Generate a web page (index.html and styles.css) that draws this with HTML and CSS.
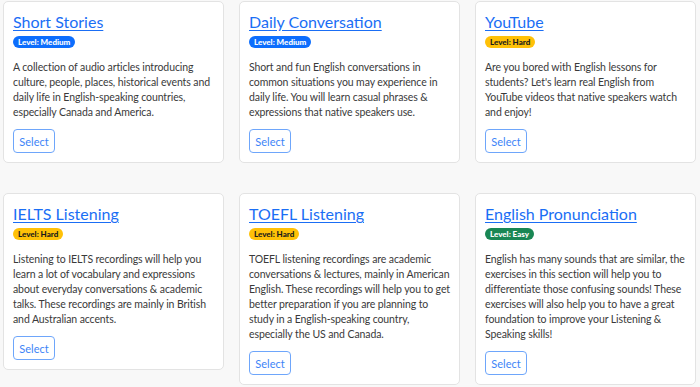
FILE: index.html
```html
<!DOCTYPE html>

<html>
    <head>
        <title>Courses</title>
        <link rel="stylesheet" href="styles.css">
    </head>

    <body>
        <div class="grid">
            <div class="card">
                <a class="card-title" href="#">Short Stories</a>
                <span class="badge badge-medium">Level: Medium</span>
                <p>A collection of audio articles introducing culture, people, places, historical events and daily life in English-speaking countries, especially Canada and America.</p>
                <button class="btn-select">Select</button>
            </div>

            <div class="card">
                <a class="card-title" href="#">Daily Conversation</a>
                <span class="badge badge-medium">Level: Medium</span>
                <p>Short and fun English conversations in common situations you may experience in daily life. You will learn casual phrases &amp; expressions that native speakers use.</p>
                <button class="btn-select">Select</button>
            </div>

            <div class="card">
                <a class="card-title" href="#">YouTube</a>
                <span class="badge badge-hard">Level: Hard</span>
                <p>Are you bored with English lessons for students? Let's learn real English from YouTube videos that native speakers watch and enjoy!</p>
                <button class="btn-select">Select</button>
            </div>

            <div class="card">
                <a class="card-title" href="#">IELTS Listening</a>
                <span class="badge badge-hard">Level: Hard</span>
                <p>Listening to IELTS recordings will help you learn a lot of vocabulary and expressions about everyday conversations &amp; academic talks. These recordings are mainly in British and Australian accents.</p>
                <button class="btn-select">Select</button>
            </div>

            <div class="card">
                <a class="card-title" href="#">TOEFL Listening</a>
                <span class="badge badge-hard">Level: Hard</span>
                <p>TOEFL listening recordings are academic conversations &amp; lectures, mainly in American English. These recordings will help you to get better preparation if you are planning to study in a English-speaking country, especially the US and Canada.</p>
                <button class="btn-select">Select</button>
            </div>

            <div class="card">
                <a class="card-title" href="#">English Pronunciation</a>
                <span class="badge badge-easy">Level: Easy</span>
                <p>English has many sounds that are similar, the exercises in this section will help you to differentiate those confusing sounds! These exercises will also help you to have a great foundation to improve your Listening &amp; Speaking skills!</p>
                <button class="btn-select">Select</button>
            </div>
        </div>
    </body>
</html>
```

FILE: styles.css
```css
* {box-sizing: border-box}

body {
  margin: 0;
  padding: 1px 3px 0 3px;
  background-color: #f8f8f8;
  font-family: Lato, "Noto Sans", sans-serif;
  color: #3a3a3a;
}

.grid {
  display: grid;
  grid-template-columns: repeat(3, 221px);
  column-gap: 15px;
  row-gap: 30px;
  align-items: start;
}

.card {
  display: flex;
  flex-direction: column;
  align-items: flex-start;
  background: #fff;
  border: 1px solid #e3e3e3;
  border-radius: 5px;
  padding: 9px 4px 9px 9px;
}

.card-title {
  font-size: 16px;
  line-height: 22px;
  color: #1a6ef5;
  text-decoration: underline;
  text-underline-offset: 2px;
  margin-bottom: 3px;
}

/* Level pills */
.badge {
  display: inline-block;
  font-size: 8px;
  font-weight: 900;
  line-height: 12px;
  padding: 0 5px;
  border-radius: 6px;
  color: #fff;
}

.badge-medium {
  background: #0d6efd;
}

.badge-hard {
  background: #ffc107;
  color: #1a1a1a;
}

.badge-easy {
  background: #198754;
}

.card p {
  font-size: 10.5px;
  letter-spacing: -0.1px;
  line-height: 15px;
  margin: 12px 0 9px 0;
}

.btn-select {
  font-family: inherit;
  font-size: 11px;
  color: #3d84f7;
  background: #fff;
  border: 1px solid #6ea6fb;
  border-radius: 4px;
  height: 24px;
  width: 42px;
  padding: 0;
  cursor: pointer;
}
```
